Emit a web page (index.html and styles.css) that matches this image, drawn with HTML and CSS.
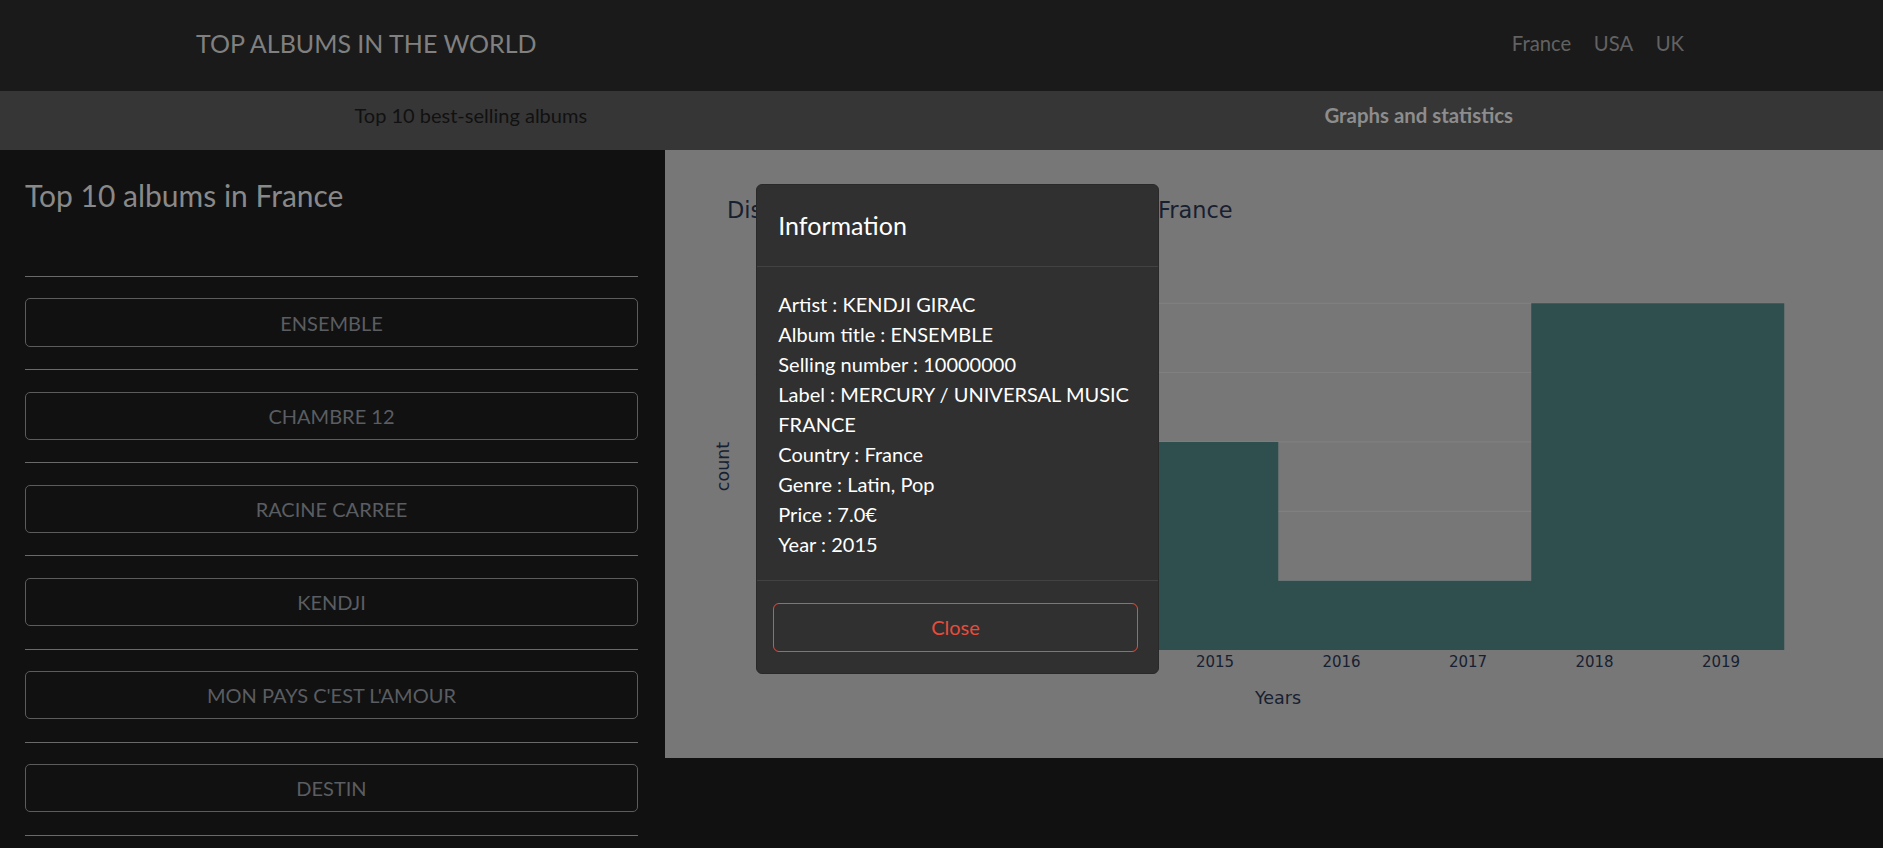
FILE: index.html
```html
<!DOCTYPE html>
<html lang="en">
<head>
<meta charset="utf-8">
<title>Top albums in the world</title>
<link rel="stylesheet" href="styles.css">
</head>
<body>
<header class="topbar">
  <div class="brand">TOP ALBUMS IN THE WORLD</div>
  <nav class="countries">
    <a href="#">France</a>
    <a href="#">USA</a>
    <a href="#">UK</a>
  </nav>
</header>
<nav class="tabs">
  <a class="tab" href="#">Top 10 best-selling albums</a>
  <a class="tab active" href="#">Graphs and statistics</a>
</nav>
<main class="content">
  <aside class="albums">
    <h3 class="albums-title">Top 10 albums in France</h3>
    <ul class="album-list">
      <li class="album-item"><hr class="sep"><button class="album-btn">ENSEMBLE</button></li>
      <li class="album-item"><hr class="sep"><button class="album-btn">CHAMBRE 12</button></li>
      <li class="album-item"><hr class="sep"><button class="album-btn">RACINE CARREE</button></li>
      <li class="album-item"><hr class="sep"><button class="album-btn">KENDJI</button></li>
      <li class="album-item"><hr class="sep"><button class="album-btn">MON PAYS C'EST L'AMOUR</button></li>
      <li class="album-item"><hr class="sep"><button class="album-btn">DESTIN</button></li>
      <li class="album-item"><hr class="sep"><button class="album-btn">LA VRAIE VIE</button></li>
      <li class="album-item"><hr class="sep"><button class="album-btn">AMOUR</button></li>
      <li class="album-item"><hr class="sep"><button class="album-btn">SILENCE ON AIME</button></li>
      <li class="album-item"><hr class="sep"><button class="album-btn">J'ME CASSE</button></li>
    </ul>
  </aside>
  <section class="chart-panel">
    <svg class="chart" viewBox="0 0 1218 608" width="1218" height="608">
      <g class="grid">
        <line x1="107.25" x2="1119.25" y1="430.65" y2="430.65"/>
        <line x1="107.25" x2="1119.25" y1="361.3" y2="361.3"/>
        <line x1="107.25" x2="1119.25" y1="291.95" y2="291.95"/>
        <line x1="107.25" x2="1119.25" y1="222.6" y2="222.6"/>
        <line x1="107.25" x2="1119.25" y1="153.25" y2="153.25"/>
      </g>
      <path class="bars" d="M107.25 500 V430.65 H360.25 V291.95 H613.25 V430.65 H866.25 V153.25 H1119.25 V500 Z"/>
      <g class="ticks">
        <text x="170.5" y="516.7">2012</text>
        <text x="297" y="516.7">2013</text>
        <text x="423.5" y="516.7">2014</text>
        <text x="550" y="516.7">2015</text>
        <text x="676.5" y="516.7">2016</text>
        <text x="803" y="516.7">2017</text>
        <text x="929.5" y="516.7">2018</text>
        <text x="1056" y="516.7">2019</text>
      </g>
      <g class="yticks">
        <text x="100" y="505">0</text>
        <text x="100" y="435.6">1</text>
        <text x="100" y="366.3">2</text>
        <text x="100" y="297">3</text>
        <text x="100" y="227.6">4</text>
        <text x="100" y="158.2">5</text>
      </g>
      <text class="axis-title" transform="translate(64 316.5) rotate(-90)">count</text>
      <text class="axis-title" x="613" y="554">Years</text>
      <text class="chart-title" x="62" y="67.7">Distribution of the albums by years in France</text>
    </svg>
  </section>
</main>

<div class="modal" role="dialog">
  <div class="modal-header">
    <h5 class="modal-title">Information</h5>
  </div>
  <div class="modal-body">
    <div>Artist : KENDJI GIRAC</div>
    <div>Album title : ENSEMBLE</div>
    <div>Selling number : 10000000</div>
    <div>Label : MERCURY / UNIVERSAL MUSIC FRANCE</div>
    <div>Country : France</div>
    <div>Genre : Latin, Pop</div>
    <div>Price : 7.0€</div>
    <div>Year : 2015</div>
  </div>
  <div class="modal-footer">
    <button class="btn-close">Close</button>
  </div>
</div>
</body>
</html>
```
FILE: styles.css
```css
html, body {
  margin: 0;
  height: 848px;
  overflow: hidden;
}
body {
  position: relative;
  background: #111111;
  font-family: Lato, "Open Sans", sans-serif;
}

/* top bar */
.topbar {
  box-sizing: border-box;
  height: 91px;
  background: #1a1a1a;
  display: flex;
  justify-content: space-between;
  align-items: flex-start;
  padding: 24.5px 199px 0 196px;
}
.brand {
  font-size: 25px;
  line-height: 37px;
  color: #808080;
}
.countries {
  display: flex;
  gap: 22.5px;
  padding-top: 4.6px;
}
.countries a {
  font-size: 20.3px;
  line-height: 28px;
  color: #626262;
  text-decoration: none;
}

/* tabs */
.tabs {
  display: grid;
  grid-template-columns: 1fr 1fr;
  height: 59px;
  background: #363636;
}
.tab {
  text-align: center;
  font-size: 20px;
  line-height: 30px;
  padding-top: 8.6px;
  color: #111111;
  text-decoration: none;
}
.tab.active {
  font-size: 20.4px;
  font-weight: 700;
  color: #8d8d8d;
  padding-left: 13px;
}

/* content */
.content {
  display: grid;
  grid-template-columns: 665px 1fr;
  align-items: start;
  height: 698px;
}
.albums {
  box-sizing: border-box;
  height: 698px;
  overflow: hidden;
  background: #111111;
  padding: 27.4px 27px 0 25px;
}
.albums-title {
  margin: 0 0 62.8px;
  font-size: 30px;
  line-height: 36px;
  font-weight: 400;
  color: #898989;
}
.album-list {
  list-style: none;
  margin: 0;
  padding: 0;
}
.sep {
  margin: 0;
  border: 0;
  border-top: 1px solid #6a6a6a;
  height: 0;
}
.album-btn {
  display: block;
  box-sizing: border-box;
  width: 100%;
  height: 48.5px;
  margin: 21.3px 0 22.3px;
  background: transparent;
  border: 1px solid #5c5c5c;
  border-radius: 5px;
  font-family: Lato, sans-serif;
  font-size: 20px;
  color: #5a5d61;
  padding: 0;
}

.chart-panel {
  height: 608px;
  background: #777777;
}
.chart {
  display: block;
}
.grid line {
  stroke: #828282;
  stroke-width: 1;
}
.bars {
  fill: #2f4f4f;
}
.chart text {
  font-family: "DejaVu Sans", Verdana, sans-serif;
  fill: #172030;
}
.ticks text {
  font-size: 15px;
  text-anchor: middle;
}
.yticks text {
  font-size: 15px;
  text-anchor: end;
}
.chart .axis-title {
  font-size: 17.5px;
  text-anchor: middle;
}
.chart .chart-title {
  font-size: 22.45px;
}

/* modal */
.modal {
  position: absolute;
  left: 756.3px;
  top: 184px;
  width: 403px;
  box-sizing: border-box;
  background: #303030;
  border: 1px solid #292929;
  border-radius: 6px;
  color: #ffffff;
}
.modal-header {
  padding: 22px 21px 21.5px;
  border-bottom: 1px solid #424242;
}
.modal-title {
  margin: 0;
  font-size: 25px;
  line-height: 37.5px;
  font-weight: 400;
}
.modal-body {
  padding: 22px 21px 21.3px;
  font-size: 20px;
  line-height: 30px;
}
.modal-footer {
  border-top: 1px solid #424242;
  padding: 22px 20.6px 21.6px 16px;
}
.btn-close {
  display: block;
  box-sizing: border-box;
  width: 100%;
  height: 48.4px;
  background: transparent;
  border: 1px solid #e74c3c;
  border-radius: 6px;
  color: #e74c3c;
  font-family: Lato, sans-serif;
  font-size: 20px;
  padding: 0;
}
```
